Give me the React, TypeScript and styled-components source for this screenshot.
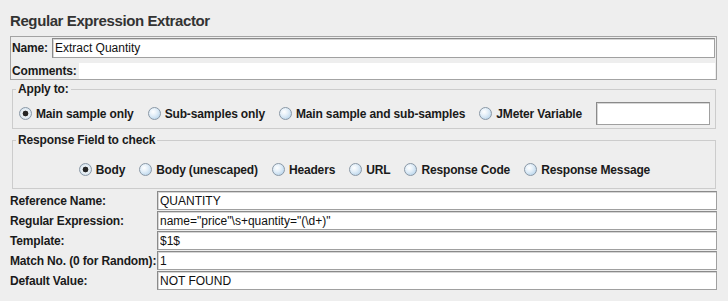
import React from 'react';
import styled, { createGlobalStyle } from 'styled-components';

const GlobalStyle = createGlobalStyle`
    html, body {
        margin: 0;
        padding: 0;
        background: #eeeeee;
    }
    body {
        font-family: "Liberation Sans", Arial, sans-serif;
        color: #222;
    }
`;

const Page = styled.div`
    width: 728px;
    height: 301px;
    box-sizing: border-box;
    padding: 0 11px 0 10px;
    overflow: hidden;
`;

const Title = styled.h1`
    margin: 0;
    padding-top: 12px;
    font-size: 15px;
    line-height: 18px;
    font-weight: bold;
    letter-spacing: -0.4px;
    color: #333;
`;

const NamePanel = styled.div`
    margin-top: 6px;
    border: 1px solid #a3a3a3;
    padding: 1px 1px 0 1px;
    display: flex;
    flex-direction: column;
    gap: 5px;
`;

const NameRow = styled.div<{ $gap: number }>`
    display: flex;
    align-items: center;
    gap: ${p => p.$gap}px;
`;

const Label = styled.span`
    font-size: 12px;
    font-weight: bold;
    letter-spacing: -0.15px;
    color: #1a1a1a;
    white-space: nowrap;
`;

const TextField = styled.input<{ $h?: number }>`
    flex: 1;
    min-width: 0;
    box-sizing: border-box;
    height: ${p => p.$h ?? 20}px;
    margin: 0;
    padding: 0 2px;
    border: 1px solid #8a8a8a;
    border-right-color: #a0a0a0;
    border-bottom-color: #a0a0a0;
    box-shadow: inset 1px 1px 0 #d6d6d6;
    background: #fff;
    font-family: "Liberation Sans", Arial, sans-serif;
    font-size: 12px;
    color: #111;
    outline: none;
`;

const CommentsArea = styled.div`
    flex: 1;
    height: 16px;
    background: #fff;
`;

const Group = styled.fieldset<{ $top: number }>`
    margin: ${p => p.$top}px 1px 0 2px;
    padding: 0;
    border: 1px solid #cccccc;
    min-inline-size: 0;
`;

const Legend = styled.legend`
    margin-left: 3px;
    padding: 0 2px;
    font-size: 12px;
    line-height: 14px;
    font-weight: bold;
    letter-spacing: -0.15px;
    color: #1a1a1a;
`;

const RadioRow = styled.div<{ $center?: boolean; $pt: number; $pb: number; $h: number }>`
    display: flex;
    align-items: center;
    justify-content: ${p => (p.$center ? 'center' : 'flex-start')};
    gap: 14px;
    height: ${p => p.$h}px;
    padding: ${p => p.$pt}px 5px ${p => p.$pb}px 6px;
`;

const RadioItem = styled.label`
    display: flex;
    align-items: center;
    gap: 4px;
    font-size: 12px;
    font-weight: bold;
    letter-spacing: -0.15px;
    color: #1a1a1a;
    white-space: nowrap;
`;

const RadioDot = styled.span<{ $on?: boolean }>`
    display: inline-block;
    width: 13px;
    height: 13px;
    box-sizing: border-box;
    border-radius: 50%;
    border: 1px solid #8a98a6;
    background: ${p =>
        p.$on
            ? 'radial-gradient(circle at 50% 50%, #262626 0 2.6px, #eef3f7 3.2px, #c0d6e8 100%)'
            : 'radial-gradient(circle at 38% 35%, #ffffff 0%, #e2eef8 40%, #a9cbe6 100%)'};
`;

const VarField = styled(TextField)`
    flex: none;
    width: 114px;
`;

const FieldsGrid = styled.div`
    margin-top: 2px;
    display: grid;
    grid-template-columns: 147px 1fr;
    grid-auto-rows: 19px;
    row-gap: 1px;
    align-items: center;
`;

const Radio = ({ label, on }: { label: string; on?: boolean }) => (
    <RadioItem>
        <RadioDot $on={on} />
        <span>{label}</span>
    </RadioItem>
);

const fields = [
    { label: 'Reference Name:', value: 'QUANTITY' },
    { label: 'Regular Expression:', value: 'name="price"\\s+quantity="(\\d+)"' },
    { label: 'Template:', value: '$1$' },
    { label: 'Match No. (0 for Random):', value: '1' },
    { label: 'Default Value:', value: 'NOT FOUND' },
];

const App = () => {
    return (
        <Page>
            <GlobalStyle />
            <Title>Regular Expression Extractor</Title>
            <NamePanel>
                <NameRow $gap={4}>
                    <Label>Name:</Label>
                    <TextField readOnly value="Extract Quantity" />
                </NameRow>
                <NameRow $gap={2}>
                    <Label>Comments:</Label>
                    <CommentsArea />
                </NameRow>
            </NamePanel>
            <Group $top={2}>
                <Legend>Apply to:</Legend>
                <RadioRow $pt={6} $pb={3} $h={23}>
                    <Radio label="Main sample only" on />
                    <Radio label="Sub-samples only" />
                    <Radio label="Main sample and sub-samples" />
                    <Radio label="JMeter Variable" />
                    <VarField readOnly value="" $h={23} />
                </RadioRow>
            </Group>
            <Group $top={4}>
                <Legend>Response Field to check</Legend>
                <RadioRow $center $pt={14} $pb={10} $h={17}>
                    <Radio label="Body" on />
                    <Radio label="Body (unescaped)" />
                    <Radio label="Headers" />
                    <Radio label="URL" />
                    <Radio label="Response Code" />
                    <Radio label="Response Message" />
                </RadioRow>
            </Group>
            <FieldsGrid>
                {fields.map(f => (
                    <React.Fragment key={f.label}>
                        <Label>{f.label}</Label>
                        <TextField readOnly value={f.value} $h={19} />
                    </React.Fragment>
                ))}
            </FieldsGrid>
        </Page>
    );
};

export default App;
